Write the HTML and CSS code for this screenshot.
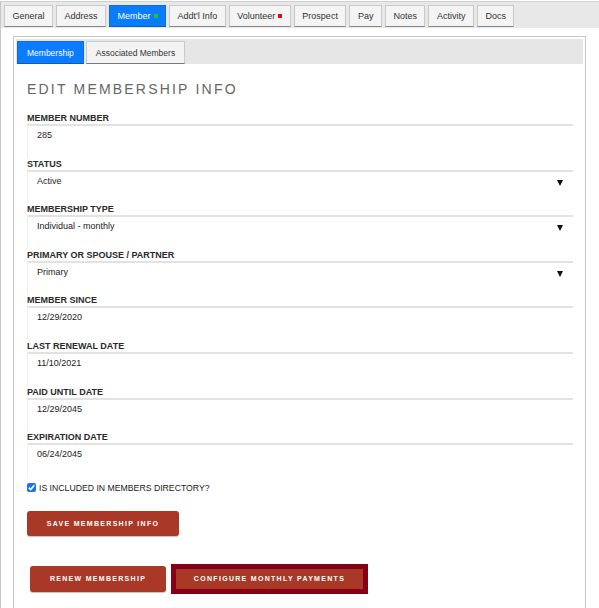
FILE: index.html
```html
<!DOCTYPE html>
<html>
<head>
<meta charset="utf-8">
<link rel="stylesheet" href="styles.css">
</head>
<body>
<div class="page">
  <div class="tabs">
    <div class="tab">General</div>
    <div class="tab">Address</div>
    <div class="tab active">Member <span class="dot green"></span></div>
    <div class="tab">Addt'l Info</div>
    <div class="tab">Volunteer <span class="dot red"></span></div>
    <div class="tab">Prospect</div>
    <div class="tab">Pay</div>
    <div class="tab">Notes</div>
    <div class="tab">Activity</div>
    <div class="tab">Docs</div>
  </div>
  <div class="panel">
    <div class="subtabs">
      <div class="subtab active">Membership</div>
      <div class="subtab">Associated Members</div>
    </div>
    <div class="content">
      <h2 class="heading">EDIT MEMBERSHIP INFO</h2>
      <div class="field">
        <label class="label">MEMBER NUMBER</label>
        <div class="input">285</div>
      </div>
      <div class="field">
        <label class="label">STATUS</label>
        <div class="input select">Active<span class="arrow"></span></div>
      </div>
      <div class="field">
        <label class="label">MEMBERSHIP TYPE</label>
        <div class="input select">Individual - monthly<span class="arrow"></span></div>
      </div>
      <div class="field">
        <label class="label">PRIMARY OR SPOUSE / PARTNER</label>
        <div class="input select">Primary<span class="arrow"></span></div>
      </div>
      <div class="field">
        <label class="label">MEMBER SINCE</label>
        <div class="input">12/29/2020</div>
      </div>
      <div class="field">
        <label class="label">LAST RENEWAL DATE</label>
        <div class="input">11/10/2021</div>
      </div>
      <div class="field">
        <label class="label">PAID UNTIL DATE</label>
        <div class="input">12/29/2045</div>
      </div>
      <div class="field">
        <label class="label">EXPIRATION DATE</label>
        <div class="input">06/24/2045</div>
      </div>
      <div class="check">
        <span class="box"><svg width="9" height="9" viewBox="0 0 9 9"><path d="M1.8 4.6 L3.7 6.6 L7.3 2.3" fill="none" stroke="#fff" stroke-width="1.6"/></svg></span>
        <span class="check-label">IS INCLUDED IN MEMBERS DIRECTORY?</span>
      </div>
      <div class="save-row">
        <button class="btn save">SAVE MEMBERSHIP INFO</button>
      </div>
      <div class="action-row">
        <button class="btn renew">RENEW MEMBERSHIP</button>
        <button class="btn focused">CONFIGURE MONTHLY PAYMENTS</button>
      </div>
    </div>
  </div>
</div>
</body>
</html>
```
FILE: styles.css
```css
* { box-sizing: border-box; }
html, body { margin: 0; padding: 0; background: #fff; }
body { font-family: "Liberation Sans", Arial, sans-serif; color: #222; }
.page {
  border-left: 1px solid #c8c8c8;
  min-height: 608px;
}
.tabs {
  display: flex;
  gap: 3px;
  background: #e8e8e8;
  border-top: 1px solid #d0d0d0;
  margin-top: 1px;
  padding: 3px 0 0 3px;
  height: 27px;
}
.tab {
  height: 22px;
  padding: 0 7.5px;
  display: flex;
  align-items: center;
  gap: 3px;
  font-size: 9px;
  color: #333;
  background: #f4f4f4;
  border: 1px solid #c9c9c9;
  border-bottom: 1px solid #888;
}
.tab.active {
  background: #0a7cff;
  color: #fff;
  border-color: #0a6fe0;
  border-bottom-color: #0a5ac0;
}
.dot { width: 4px; height: 4px; display: inline-block; }
.dot.green { background: #26c22e; }
.dot.red { background: #e01010; }
.panel {
  margin: 8px 13px 0 12px;
  border: 1px solid #c8c8c8;
  border-bottom: none;
  padding: 2px 2px 0 2px;
  min-height: 580px;
}
.subtabs {
  display: flex;
  gap: 2px;
  background: #e6e6e6;
  padding: 2px 0 0 1px;
  height: 25px;
}
.subtab {
  height: 23px;
  padding: 0 9px;
  display: flex;
  align-items: center;
  font-size: 8.5px;
  color: #333;
  background: #f3f3f3;
  border: 1px solid #c9c9c9;
  border-bottom: 1px solid #777;
}
.subtab.active {
  background: #0a7cff;
  color: #fff;
  border-color: #0a6fe0;
  border-bottom-color: #0a5ac0;
  padding: 0 9px;
}
.content {
  padding: 0 10px 0 11px;
}
.heading {
  margin: 17px 0 15px;
  font-size: 14px;
  font-weight: normal;
  letter-spacing: 2.2px;
  color: #666;
  line-height: 16px;
}
.field { height: 45.6px; }
.label {
  display: block;
  font-size: 9px;
  font-weight: bold;
  color: #2a2a2a;
  line-height: 12px;
  height: 12px;
}
.input {
  position: relative;
  height: 33.6px;
  border-top: 2px solid #e2e2e2;
  border-left: 1px solid #efefef;
  padding: 3px 9px;
  font-size: 9px;
  color: #222;
  line-height: 12px;
}
.arrow {
  position: absolute;
  right: 10px;
  top: 8px;
  width: 0; height: 0;
  border-left: 3.5px solid transparent;
  border-right: 3.5px solid transparent;
  border-top: 6px solid #111;
}
.check {
  display: flex;
  align-items: center;
  gap: 3px;
  margin-top: 5px;
  height: 12px;
}
.check-label { font-size: 8.7px; color: #222; line-height: 12px; }
.box {
  width: 9px; height: 9px;
  border-radius: 2px;
  background: #1a73e8;
  display: inline-flex;
}
.save-row { margin-top: 17px; }
.btn {
  font-family: "Liberation Sans", Arial, sans-serif;
  background: #a93826;
  color: #fff;
  border: none;
  border-radius: 3px;
  font-size: 7px;
  font-weight: bold;
  letter-spacing: 1.3px;
  height: 25px;
  padding: 0;
  white-space: nowrap;
  box-shadow: 0 1px 1px rgba(0,0,0,0.25);
}
.save { width: 152px; }
.action-row {
  display: flex;
  align-items: center;
  gap: 5px;
  margin-top: 28px;
  padding-left: 3px;
}
.renew { width: 136px; height: 26px; }
.focused {
  width: 197px;
  height: 30px;
  border-radius: 0;
  border: 5px solid #860016;
  box-shadow: none;
}
```
